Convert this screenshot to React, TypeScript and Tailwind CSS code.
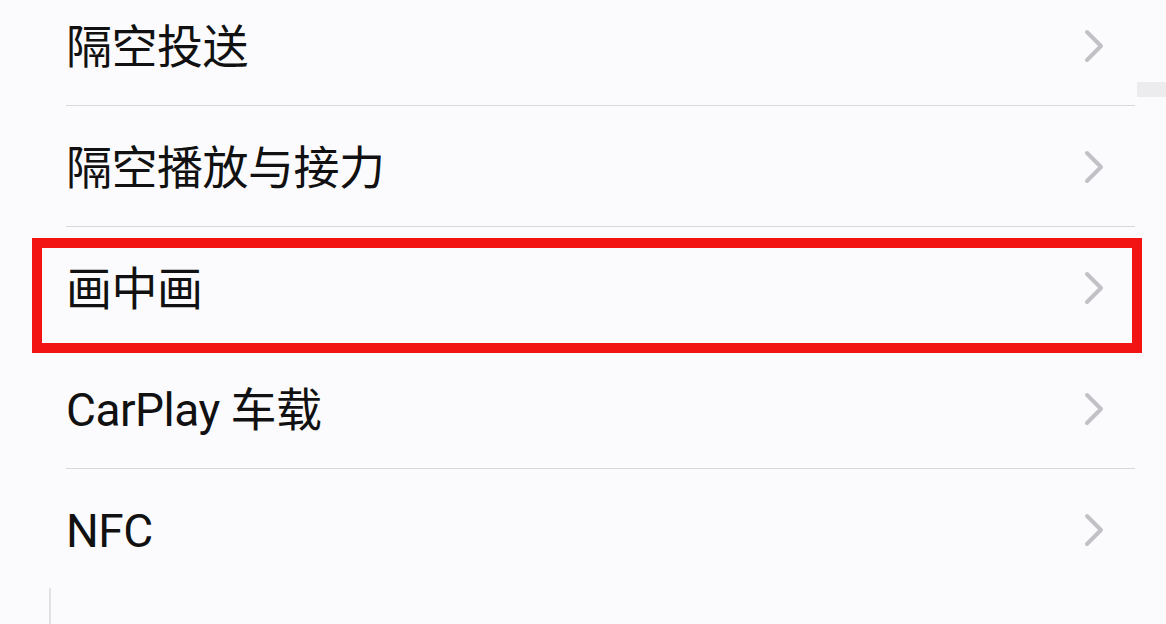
import React from "react";

const items = ["隔空投送", "隔空播放与接力", "画中画", "CarPlay 车载", "NFC"];

function Chevron() {
  return (
    <svg width="22" height="34" viewBox="0 0 22 34" className="shrink-0 -mt-[2px]">
      <polyline
        points="4,3 18,17 4,31"
        fill="none"
        stroke="#c2c2c6"
        strokeWidth="4"
        strokeLinecap="round"
        strokeLinejoin="round"
      />
    </svg>
  );
}

export default function App() {
  return (
    <div
      className="relative w-[1166px] h-[624px] overflow-hidden bg-[#fbfbfd] text-[#111]"
      style={{ fontFamily: 'Roboto, "Noto Sans CJK SC", sans-serif' }}
    >
      <div className="-mt-[15px] flex flex-col">
        {items.map((label, i) => (
          <div key={label} className="relative h-[121px] flex flex-col">
            <div className="flex-1 flex items-center pl-[66px] pr-[61px] pt-[4px]">
              <span className="flex-1 text-[46px] leading-none tracking-[-0.5px]">{label}</span>
              <Chevron />
            </div>
            {i < items.length - 1 ? (
              <div className="ml-[66px] mr-[31px] h-px bg-[#d8d8dc]" />
            ) : (
              <div className="h-px" />
            )}
            {i === 2 && (
              <div className="absolute left-[32px] right-[24px] top-[11px] h-[115px] border-[10px] border-[#f21313]" />
            )}
          </div>
        ))}
      </div>
      <div className="absolute right-0 top-[82px] w-[29px] h-[15px] bg-[#ececee]" />
      <div className="absolute left-[49px] top-[588px] w-[2px] h-[36px] bg-[#e2e2e4]" />
    </div>
  );
}
